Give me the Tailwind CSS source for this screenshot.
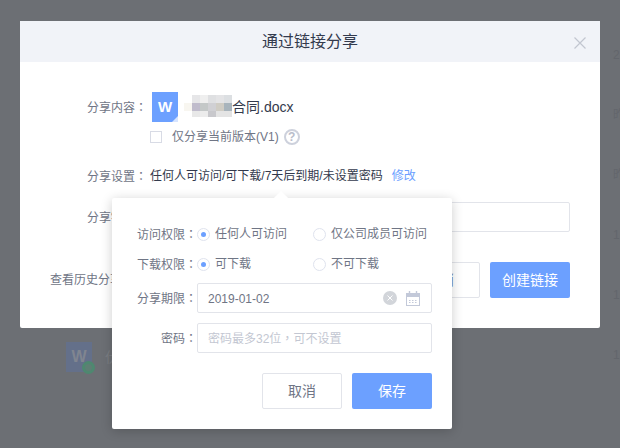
<!DOCTYPE html>
<html lang="en">
<head>
    <meta charset="UTF-8">
    <title>通过链接分享</title>
    <script src="https://cdn.jsdelivr.net/npm/@tailwindcss/browser@4"></script>
</head>
<body class="m-0 overflow-hidden">
    <div class="relative w-[620px] h-[448px] overflow-hidden bg-[#6c6f74] font-['Liberation_Sans','Noto_Sans_CJK_SC',sans-serif] text-[12px] text-[#6f7585]">

        <!-- page behind the overlay -->
        <div class="absolute left-[66px] top-[342px] flex items-center gap-[13px] text-[#7a7d82] text-[14px]">
            <div class="relative w-[26px] h-[30px] bg-[#64708a] flex items-center justify-center font-bold text-[16px] text-[#808590]">W
                <span class="absolute -right-[3px] -bottom-[2px] w-[13px] h-[13px] rounded-full bg-[#5e7f74] border-[3px] border-[#4e8870]"></span>
            </div>
            <span>伏</span>
        </div>
        <div class="absolute left-[613px] top-[46px] text-[#63666c] flex flex-col text-[12px]">
            <span>2</span>
            <span class="mt-[42px]">昨</span>
            <span class="mt-[42px]">昨</span>
            <span class="mt-[42px]">1</span>
            <span class="mt-[42px]">1</span>
            <span class="mt-[42px]">1</span>
        </div>

        <!-- share dialog -->
        <div class="absolute left-[20px] top-[21px] w-[580px] h-[307px] bg-white rounded-[2px]">
            <div class="relative h-[41px] bg-[#f1f3f8] flex items-center justify-center text-[16px] text-[#333a4d]">
                通过链接分享
                <svg class="absolute right-[14px] top-[16px] w-[12px] h-[12px]" viewBox="0 0 12 12" fill="none" stroke="#c2c6d0" stroke-width="1.2">
                    <path d="M.5.5l11 11M11.5.5l-11 11"/>
                </svg>
            </div>

            <div class="pl-[67px] pr-[30px] pt-[30px]">
                <div class="flex items-center h-[30px]">
                    <span class="w-[65px] shrink-0">分享内容<span class="font-['Noto_Sans_CJK_TC']">：</span></span>
                    <div class="relative w-[26px] h-[30px] bg-[#6ca0ff] flex items-center justify-center text-white font-bold text-[15px]">W
                        <span class="absolute right-0 bottom-0 w-[6px] h-[6px] bg-[#d6e4ff] [clip-path:polygon(100%_0,100%_100%,0_100%)]"></span>
                    </div>
                    <svg class="ml-[6px] w-[48px] h-[24px]" viewBox="0 0 48 24" shape-rendering="crispEdges">
                        <rect x="8" y="0" width="8" height="8" fill="#e6e6e8"/>
                        <rect x="16" y="0" width="8" height="8" fill="#efefef"/>
                        <rect x="24" y="0" width="8" height="8" fill="#dfe0e2"/>
                        <rect x="32" y="0" width="8" height="8" fill="#e4e4e6"/>
                        <rect x="40" y="0" width="8" height="8" fill="#dcdfe2"/>
                        <rect x="0" y="8" width="8" height="8" fill="#f8f6f0"/>
                        <rect x="8" y="8" width="8" height="8" fill="#c0bccc"/>
                        <rect x="16" y="8" width="8" height="8" fill="#c4c8c8"/>
                        <rect x="24" y="8" width="8" height="8" fill="#d0d0d4"/>
                        <rect x="32" y="8" width="8" height="8" fill="#cfccc4"/>
                        <rect x="40" y="8" width="8" height="8" fill="#a8b4bc"/>
                        <rect x="8" y="16" width="8" height="6" fill="#e8e8e8"/>
                        <rect x="16" y="16" width="8" height="6" fill="#ececec"/>
                        <rect x="24" y="16" width="8" height="6" fill="#c8c8cc"/>
                        <rect x="32" y="16" width="16" height="6" fill="#e4e4e4"/>
                    </svg>
                    <span class="text-[14px] text-[#333a4d]">合同.docx</span>
                </div>

                <div class="flex items-center h-[20px] mt-[5px] pl-[63px]">
                    <span class="w-[12px] h-[12px] border border-[#d8dbe5]"></span>
                    <span class="ml-[10px]">仅分享当前版本(V1)</span>
                    <span class="ml-[5px] w-[16px] h-[16px] rounded-full border-2 border-[#cdd1dc] flex items-center justify-center text-[12px] font-bold text-[#b9bdcb]">?</span>
                </div>

                <div class="flex items-center h-[20px] mt-[19px]">
                    <span class="w-[63px] shrink-0">分享设置<span class="font-['Noto_Sans_CJK_TC']">：</span></span>
                    <span class="text-[#333a4d]">任何人可访问/可下载/7天后到期/未设置密码</span>
                    <span class="ml-[9px] text-[#6ca0ff]">修改</span>
                </div>

                <div class="flex items-center h-[30px] mt-[16px]">
                    <span class="w-[63px] shrink-0">分享链接<span class="font-['Noto_Sans_CJK_TC']">：</span></span>
                    <div class="flex-1 h-[30px] border border-[#e2e4ea] rounded-[2px]"></div>
                </div>

                <div class="flex items-center justify-between h-[36px] mt-[30px] -ml-[37px]">
                    <span>查看历史分享</span>
                    <div class="flex gap-[10px] text-[14px]">
                        <button class="w-[80px] h-[36px] border border-[#e2e4ea] rounded-[2px] text-[#6f7585]">取消</button>
                        <button class="w-[80px] h-[36px] bg-[#6ca0ff] rounded-[2px] text-white">创建链接</button>
                    </div>
                </div>
            </div>
        </div>

        <!-- settings popover -->
        <div class="absolute left-[112px] top-[198px] w-[340px] h-[231px] bg-white rounded-[2px] shadow-[0_2px_12px_rgba(0,0,0,0.2)] pt-[21px] pr-[20px]">
            <span class="absolute left-[164px] -top-[5px] w-[10px] h-[10px] bg-white rotate-45"></span>

            <div class="relative flex items-center h-[30px]">
                <span class="w-[85px] text-right shrink-0">访问权限<span class="font-['Noto_Sans_CJK_TC']">：</span></span>
                <div class="flex items-center w-[116px]">
                    <span class="w-[13px] h-[13px] rounded-full border border-[#dfe3ee] flex items-center justify-center"><span class="w-[5px] h-[5px] rounded-full bg-[#6ca0ff]"></span></span>
                    <span class="ml-[5px]">任何人可访问</span>
                </div>
                <div class="flex items-center">
                    <span class="w-[13px] h-[13px] rounded-full border border-[#dfe3ee]"></span>
                    <span class="ml-[5px]">仅公司成员可访问</span>
                </div>
            </div>

            <div class="flex items-center h-[30px]">
                <span class="w-[85px] text-right shrink-0">下载权限<span class="font-['Noto_Sans_CJK_TC']">：</span></span>
                <div class="flex items-center w-[116px]">
                    <span class="w-[13px] h-[13px] rounded-full border border-[#dfe3ee] flex items-center justify-center"><span class="w-[5px] h-[5px] rounded-full bg-[#6ca0ff]"></span></span>
                    <span class="ml-[5px]">可下载</span>
                </div>
                <div class="flex items-center">
                    <span class="w-[13px] h-[13px] rounded-full border border-[#dfe3ee]"></span>
                    <span class="ml-[5px]">不可下载</span>
                </div>
            </div>

            <div class="flex items-center h-[30px] mt-[4px]">
                <span class="w-[85px] text-right shrink-0">分享期限<span class="font-['Noto_Sans_CJK_TC']">：</span></span>
                <div class="flex-1 h-[30px] border border-[#e2e4ea] rounded-[2px] flex items-center pl-[10px] pr-[11px]">
                    <span class="flex-1 pt-[1px]">2019-01-02</span>
                    <svg class="w-[14px] h-[14px]" viewBox="0 0 14 14">
                        <circle cx="7" cy="7" r="7" fill="#d2d5da"/>
                        <path d="M4.5 4.5l5 5M9.5 4.5l-5 5" stroke="#fff" stroke-width="1" fill="none"/>
                    </svg>
                    <svg class="ml-[9px] w-[14px] h-[15px]" viewBox="0 0 14 15" fill="none" stroke="#c3c9d9">
                        <rect x=".5" y="2.5" width="13" height="12"/>
                        <path d="M0 4.5h14" stroke-width="3"/>
                        <path d="M3.5 0v3M10.5 0v3" stroke-width="1.4"/>
                        <path d="M3 9.5h8M3 11.5h8" stroke-dasharray="1.5 1.5"/>
                    </svg>
                </div>
            </div>

            <div class="flex items-center h-[30px] mt-[10px]">
                <span class="w-[85px] text-right shrink-0">密码<span class="font-['Noto_Sans_CJK_TC']">：</span></span>
                <div class="flex-1 h-[30px] border border-[#e2e4ea] rounded-[2px] flex items-center pl-[10px] text-[#c3c7d2]"><span>密码最多32位<span class="font-['Noto_Sans_CJK_TC']">，</span>可不设置</span></div>
            </div>

            <div class="flex justify-end gap-[10px] mt-[20px] text-[14px]">
                <button class="w-[80px] h-[36px] border border-[#e2e4ea] rounded-[2px] text-[#6f7585]">取消</button>
                <button class="w-[80px] h-[36px] bg-[#6ca0ff] rounded-[2px] text-white">保存</button>
            </div>
        </div>
    </div>
</body>
</html>
